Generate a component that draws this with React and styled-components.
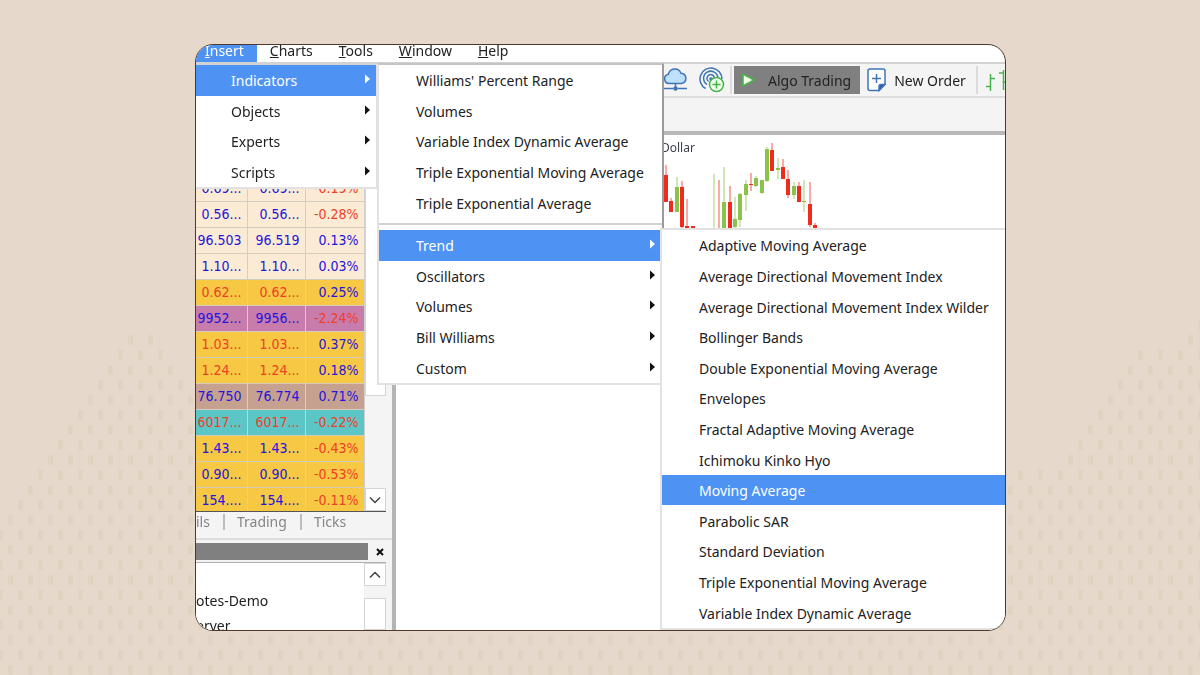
import React from "react";
import styled, { createGlobalStyle, css } from "styled-components";

const Global = createGlobalStyle`
  * { box-sizing: border-box; }
  body { margin: 0; background: #e6d9cc; font: 14px/16px "Noto Sans", sans-serif; color: #222; }
  button { font: inherit; color: inherit; border: 0; padding: 0; background: none; text-align: left; }
`;

/* Backdrop */

const Backdrop = styled.svg`
  position: fixed;
  inset: 0;
  width: 100%;
  height: 100%;
  z-index: -1;
`;

const dots = [];
const rightStart = [1188, 1138, 1128, 1118, 1108, 1098, 1088, 1078, 1068, 1018];
for (let row = -1; row < 23; row++) {
  const y = 335 + row * 15;
  for (let x = row % 2 === 0 ? -12 : -2; x < 1200; x += 20) {
    const left = row >= 0 && x >= 128 - row * 10 && x <= 148 + row * 10;
    const right = row < 0 ? x >= 1198 : x >= (rightStart[row] ?? 600);
    if (left || right || row >= 19) dots.push([x, y]);
  }
}

/* Frame */

const Page = styled.main`
  height: 100vh;
  padding: 44px 194px 44px 195px;
  display: flex;
`;

const Card = styled.section`
  position: relative;
  flex: 1;
  min-width: 0;
  display: flex;
  flex-direction: column;
  background: #fff;
  border: 1px solid #4b3a2c;
  border-radius: 18px;
  overflow: hidden;
`;

const MenuBar = styled.nav`
  flex: none;
  display: flex;
  height: 19px;
  border-bottom: 2px solid #d2d2d2;
`;

const MenuBarItem = styled.button`
  height: 17px;
  padding: 0 13px 5px;
  line-height: 12px;
  white-space: nowrap;
  ${(p) => p.$open && css`background: #4e93f4; color: #fff; padding-left: 9px;`}
`;

const Toolbar = styled.div`
  flex: none;
  display: flex;
  align-items: center;
  height: 34px;
  padding-left: 467px;
  background: #f4f4f4;
  border-bottom: 2px solid #dcdcdc;
  overflow: hidden;
`;

const ToolButton = styled.button`
  flex: none;
  display: flex;
  align-items: center;
  height: 28px;
  white-space: nowrap;
  margin-right: ${(p) => p.$after || 0}px;
  ${(p) => p.$active && css`background: #808080; padding: 0 9px 0 8px;`}
`;

const ToolLabel = styled.span`
  padding: 2px 0 0 ${(p) => p.$gap}px;
`;

const ToolDivider = styled.span`
  flex: none;
  width: 2px;
  height: 28px;
  background: #dcdcdc;
  margin-right: ${(p) => p.$after}px;
`;

const SecondBar = styled.div`
  flex: none;
  height: 37px;
  background: #f4f4f4;
  border-bottom: 4px solid #b8b8b8;
`;

const Workspace = styled.div`
  flex: 1;
  display: flex;
  min-height: 0;
`;

/* Left dock */

const Dock = styled.aside`
  flex: none;
  width: 200px;
  display: flex;
  flex-direction: column;
  background: #f4f4f4;
  border-right: 4px solid #b4b4b4;
  overflow: hidden;
`;

const Watch = styled.div`
  flex: none;
  display: flex;
  width: 190px;
  height: 377px;
  padding-top: 40px;
  background: #fff;
  border-bottom: 1px solid #555;
  overflow: hidden;
`;

const Quotes = styled.table`
  flex: none;
  align-self: flex-start;
  width: 181px;
  margin-left: -13px;
  table-layout: fixed;
  border-collapse: collapse;
  font-family: "DejaVu Sans Condensed", "DejaVu Sans", sans-serif;
`;

const QuoteRow = styled.tr`
  height: 26px;
  background: ${(p) => p.$bg};
`;

const Quote = styled.td`
  padding: 0 5px 0 0;
  border-right: 1px solid #cfcfcf;
  border-bottom: 1px solid #d4cdbd;
  text-align: right;
  white-space: nowrap;
  line-height: 16px;
  color: ${(p) => (p.$red ? "#ee4028" : "#2414dc")};
`;

const ScrollTrack = styled.div`
  flex: 1;
  display: flex;
  flex-direction: column;
  justify-content: space-between;
  background: #f4f4f4;
`;

const ScrollThumb = styled.div`
  ${(p) => (p.$size ? css`height: ${p.$size}px;` : css`flex: 1;`)}
  background: #fff;
  border: 1px solid #d4d4d4;
`;

const ScrollButton = styled.button`
  flex: none;
  display: flex;
  align-items: center;
  justify-content: center;
  height: 23px;
  background: #fff;
  border: 1px solid #d4d4d4;
`;

const Tabs = styled.div`
  flex: none;
  display: flex;
  height: 28px;
  padding: 2px 0 8px;
  border-bottom: 2px solid #dcdcdc;
`;

const Tab = styled.button`
  padding: 0 13px 0 12px;
  line-height: 16px;
  color: #858585;
  border-right: ${(p) => (p.$last ? 0 : 2)}px solid #bdbdbd;
  ${(p) => p.$first && css`padding-left: 0;`}
`;

const PanelTitle = styled.div`
  flex: none;
  display: flex;
  height: 22px;
  padding: 3px 0 2px;
`;

const TitleStrip = styled.div`
  width: 172px;
  background: #808080;
`;

const CloseButton = styled.button`
  flex: 1;
  display: flex;
  align-items: center;
  justify-content: center;
`;

const Navigator = styled.div`
  flex: 1;
  display: flex;
  width: 190px;
  min-height: 0;
  border-top: 1px solid #b0b0b0;
`;

const Accounts = styled.ul`
  width: 168px;
  margin: 0;
  padding: 25px 0 0;
  list-style: none;
  background: #fff;
  line-height: 25px;
`;

const NavScroll = styled.div`
  flex: 1;
  display: flex;
  flex-direction: column;
  gap: 12px;
`;

const Chart = styled.div`
  flex: 1;
  min-width: 0;
  overflow: hidden;
`;

const ChartLabel = styled.text`
  font-size: 12px;
  fill: #3a3f4a;
`;

/* Drop-down menus */

const Menu = styled.div`
  position: absolute;
  display: flex;
  flex-direction: column;
  top: ${(p) => p.$top}px;
  left: ${(p) => p.$left}px;
  width: ${(p) => p.$width}px;
  height: ${(p) => p.$height}px;
  background: #fff;
  border: 2px solid #e2e2e2;
`;

const MainMenu = styled(Menu)`
  border-left: 0;
  border-top-color: #d2d2d2;
`;

const IndicatorMenu = styled(Menu)`
  border-right-color: #9c9c9c;
  border-top-color: #c4c4c4;
`;

const TrendMenu = styled(Menu)`
  width: auto;
  height: auto;
  right: 0;
  bottom: 0;
  border-width: 2px 0 2px 2px;
`;

const MenuItem = styled.button`
  flex: 1;
  min-height: 0;
  display: flex;
  align-items: center;
  justify-content: space-between;
  padding: 2px ${(p) => p.$end || 6}px 0 ${(p) => p.$start}px;
  white-space: nowrap;
  ${(p) => p.$selected && css`background: #4e93f4; color: #fff;`}
`;

const Separator = styled.hr`
  width: 100%;
  height: 2px;
  margin: 5px 0;
  border: 0;
  background: #d2d2d2;
`;

const ArrowIcon = styled.svg`
  margin-bottom: 4px;
  fill: ${(p) => (p.$light ? "#fff" : "#111")};
`;

const Arrow = ({ light }) => (
  <ArrowIcon $light={light} width="5" height="10" viewBox="0 0 5 10"><path d="M0 0.5 5 5 0 9.5z" /></ArrowIcon>
);

/* Data */

const CREAM = "#fcebd4";
const GOLD = "#f7c843";
const quotes = [
  [CREAM, "0.69...", "0.69...", "-0.19%", 0, 1],
  [CREAM, "0.56...", "0.56...", "-0.28%", 0, 1],
  [CREAM, "96.503", "96.519", "0.13%", 0, 0],
  [CREAM, "1.10...", "1.10...", "0.03%", 0, 0],
  [GOLD, "0.62...", "0.62...", "0.25%", 1, 0],
  ["#c77cac", "9952...", "9956...", "-2.24%", 0, 1],
  [GOLD, "1.03...", "1.03...", "0.37%", 1, 0],
  [GOLD, "1.24...", "1.24...", "0.18%", 1, 0],
  ["#c6a18f", "76.750", "76.774", "0.71%", 0, 0],
  ["#5cc6c6", "6017...", "6017...", "-0.22%", 1, 1],
  [GOLD, "1.43...", "1.43...", "-0.43%", 0, 1],
  [GOLD, "0.90...", "0.90...", "-0.53%", 0, 1],
  [GOLD, "154....", "154....", "-0.11%", 0, 1],
];

// x, wick top, wick bottom, body top, body bottom, rising
const candles = [
  [666, 165, 202, 175, 202, 0], [671, 198, 212, 201, 212, 0], [677, 177, 212, 187, 212, 1],
  [682, 181, 228, 187, 227, 0], [687, 199, 228, 226, 228, 0], [693, 226, 228, 226, 228, 0],
  [714, 174, 228, 228, 228, 1], [719, 180, 228, 228, 228, 0], [724, 167, 228, 202, 228, 1],
  [730, 186, 228, 202, 228, 0], [735, 197, 228, 219, 227, 1], [740, 193, 227, 194, 220, 1],
  [746, 180, 211, 184, 195, 1], [751, 173, 191, 184, 185, 0], [756, 176, 187, 178, 186, 1],
  [762, 180, 194, 180, 193, 1], [767, 147, 182, 149, 181, 1], [772, 143, 171, 150, 171, 0],
  [778, 158, 179, 168, 170, 1], [783, 159, 179, 167, 179, 0], [788, 170, 198, 179, 195, 0],
  [794, 182, 199, 186, 195, 1], [799, 182, 202, 186, 202, 0], [804, 180, 212, 201, 202, 1],
  [810, 182, 227, 204, 225, 0], [815, 223, 228, 225, 228, 0], [496, 384, 385, 384, 385, 0],
];

const mainItems = ["Indicators", "Objects", "Experts", "Scripts"];
const plainIndicators = [
  "Williams' Percent Range", "Volumes", "Variable Index Dynamic Average",
  "Triple Exponential Moving Average", "Triple Exponential Average",
];
const indicatorGroups = ["Trend", "Oscillators", "Volumes", "Bill Williams", "Custom"];
const trendItems = [
  "Adaptive Moving Average", "Average Directional Movement Index",
  "Average Directional Movement Index Wilder", "Bollinger Bands",
  "Double Exponential Moving Average", "Envelopes", "Fractal Adaptive Moving Average",
  "Ichimoku Kinko Hyo", "Moving Average", "Parabolic SAR", "Standard Deviation",
  "Triple Exponential Moving Average", "Variable Index Dynamic Average",
];

export default function App() {
  return (
    <>
      <Global />
      <Backdrop viewBox="0 0 1200 675" preserveAspectRatio="xMidYMid slice" aria-hidden="true">
        {dots.map(([x, y]) => (
          <rect key={`${x}-${y}`} x={x} y={y} width="5" height="10" rx="2" fill="#e1d3c1" />
        ))}
      </Backdrop>
      <Page>
        <Card>
          <MenuBar>
            <MenuBarItem $open><u>I</u>nsert</MenuBarItem>
            <MenuBarItem><u>C</u>harts</MenuBarItem>
            <MenuBarItem><u>T</u>ools</MenuBarItem>
            <MenuBarItem><u>W</u>indow</MenuBarItem>
            <MenuBarItem><u>H</u>elp</MenuBarItem>
          </MenuBar>

          <Toolbar>
            <ToolButton $after={11} aria-label="Cloud">
              <svg width="25" height="24" viewBox="0 0 25 24" fill="none" stroke="#3f74b5" strokeWidth="1.5">
                <path d="M6 15.5a4.7 4.7 0 0 1-.6-9.3A6.6 6.6 0 0 1 18 5.2a5.2 5.2 0 0 1 .6 10.3z" fill="#bfe0fb" />
                <path d="M12.500 15.500v4M1 20.500h9.500M14.500 20.500H24" />
                <circle cx="12.500" cy="20.500" r="1.500" fill="#3f74b5" />
              </svg>
            </ToolButton>
            <ToolButton $after={5} aria-label="Signals">
              <svg width="26" height="26" viewBox="0 0 26 26" fill="none" stroke="#3f74b5" strokeWidth="1.5">
                <path d="M6.500 21.500A11 11 0 1 1 23 12" />
                <path d="M8 17.500A7.200 7.200 0 1 1 19 11" />
                <path d="M9.500 14.500A3.800 3.800 0 1 1 15.500 11" />
                <circle cx="12" cy="12" r="1.800" fill="#3f74b5" stroke="none" />
                <circle cx="17.500" cy="17.500" r="7" fill="#eefbe9" stroke="#45b549" />
                <path d="M17.500 13.500v8M13.500 17.500h8" stroke="#45b549" />
              </svg>
            </ToolButton>
            <ToolDivider $after={2} />
            <ToolButton $active $after={7}>
              <svg width="13" height="16" viewBox="0 0 13 16"><path d="M1 2 12 8 1 14z" fill="#eefbe9" stroke="#45b549" strokeWidth="1.500" strokeLinejoin="round" /></svg>
              <ToolLabel $gap={13}>Algo Trading</ToolLabel>
            </ToolButton>
            <ToolButton $after={10}>
              <svg width="19" height="24" viewBox="0 0 19 24" fill="none" stroke="#3f74b5" strokeWidth="1.500">
                <path d="M3 1h13a2 2 0 0 1 2 2v13l-6 6.500H3a2 2 0 0 1-2-2V3a2 2 0 0 1 2-2z" fill="#fff" />
                <path d="M18 16.500h-4a2 2 0 0 0-2 2v4z" fill="#2d5fa4" />
                <path d="M9.500 6v9M5 10.500h9" />
              </svg>
              <ToolLabel $gap={8}>New Order</ToolLabel>
            </ToolButton>
            <ToolDivider $after={8} />
            <ToolButton aria-label="Bar chart">
              <svg width="26" height="28" viewBox="0 0 26 28" fill="none" stroke="#45b549" strokeWidth="1.500">
                <path d="M4.500 8v17M0 20.500h4.500M4.500 12.500H9M17.500 4v20M13 7H17.500M17.500 16h5" />
              </svg>
            </ToolButton>
          </Toolbar>
          <SecondBar />

          <Workspace>
            <Dock>
              <Watch>
                <Quotes>
                  <colgroup><col width="64" /><col width="58" /><col width="59" /></colgroup>
                  <tbody>
                    {quotes.map(([bg, bid, ask, change, redPrice, redChange], i) => (
                      <QuoteRow key={i} $bg={bg}>
                        <Quote $red={redPrice}>{bid}</Quote>
                        <Quote $red={redPrice}>{ask}</Quote>
                        <Quote $red={redChange}>{change}</Quote>
                      </QuoteRow>
                    ))}
                  </tbody>
                </Quotes>
                <ScrollTrack>
                  <ScrollThumb $size={221} />
                  <ScrollButton aria-label="Scroll down">
                    <svg width="12" height="8" viewBox="0 0 12 8" fill="none" stroke="#444" strokeWidth="1.500"><path d="M1 1.500 6 6.500 11 1.500" /></svg>
                  </ScrollButton>
                </ScrollTrack>
              </Watch>
              <Tabs>
                <Tab $first>ils</Tab>
                <Tab>Trading</Tab>
                <Tab $last>Ticks</Tab>
              </Tabs>
              <PanelTitle>
                <TitleStrip />
                <CloseButton aria-label="Close">
                  <svg width="8" height="8" viewBox="0 0 8 8" stroke="#111" strokeWidth="2"><path d="M1 1 7 7M7 1 1 7" /></svg>
                </CloseButton>
              </PanelTitle>
              <Navigator>
                <Accounts>
                  <li>otes-Demo</li>
                  <li>erver</li>
                </Accounts>
                <NavScroll>
                  <ScrollButton aria-label="Scroll up">
                    <svg width="12" height="8" viewBox="0 0 12 8" fill="none" stroke="#444" strokeWidth="1.500"><path d="M1 6.500 6 1.500 11 6.500" /></svg>
                  </ScrollButton>
                  <ScrollThumb />
                </NavScroll>
              </Navigator>
            </Dock>

            <Chart>
              <svg width="610" height="260" viewBox="396 135 610 260">
                <ChartLabel x="661" y="152">Dollar</ChartLabel>
                {candles.map(([x, wt, wb, bt, bb, up]) => (
                  <g key={x} fill={up ? "#8bc34a" : "#f02a1d"}>
                    <rect x={x - 1} y={wt} width="2" height={wb - wt} opacity="0.4" />
                    <rect x={x - 2} y={bt} width="4" height={bb - bt} />
                  </g>
                ))}
              </svg>
            </Chart>
          </Workspace>

          <MainMenu $top={18} $left={0} $width={182} $height={126}>
            {mainItems.map((name, i) => (
              <MenuItem key={name} $start={35} $selected={i === 0}>{name}<Arrow light={i === 0} /></MenuItem>
            ))}
          </MainMenu>
          <IndicatorMenu $top={18} $left={181} $width={287} $height={322}>
            {plainIndicators.map((name) => <MenuItem key={name} $start={37}>{name}</MenuItem>)}
            <Separator />
            {indicatorGroups.map((name, i) => (
              <MenuItem key={name} $start={37} $end={7} $selected={i === 0}>{name}<Arrow light={i === 0} /></MenuItem>
            ))}
          </IndicatorMenu>
          <TrendMenu $top={183} $left={464}>
            {trendItems.map((name) => (
              <MenuItem key={name} $start={37} $selected={name === "Moving Average"}>{name}</MenuItem>
            ))}
          </TrendMenu>
        </Card>
      </Page>
    </>
  );
}
